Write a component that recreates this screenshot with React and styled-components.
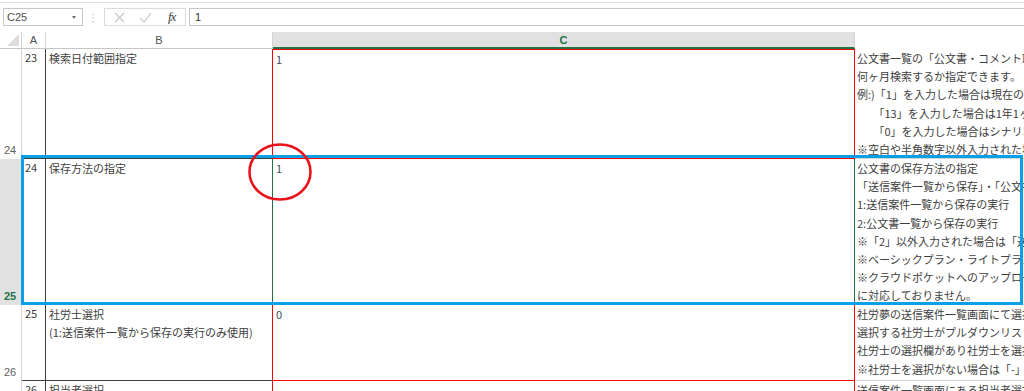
import styled, { createGlobalStyle } from "styled-components";

const GlobalStyle = createGlobalStyle`
  html, body {
    margin: 0;
    padding: 0;
    background: #ffffff;
    overflow: hidden;
  }
  body {
    width: 1024px;
    height: 391px;
    font-family: "Noto Sans CJK JP", "Liberation Sans", sans-serif;
    color: #404040;
  }
`;

const rows = [
  {
    header: "24",
    a: "23",
    b: ["検索日付範囲指定"],
    c: "1",
    d: [
      "公文書一覧の「公文書・コメント取得」画面で",
      "何ヶ月検索するか指定できます。",
      "例:)「1」を入力した場合は現在の月のみ検索します。",
      "　　「13」を入力した場合は1年1ヶ月前から検索します。",
      "　　「0」を入力した場合はシナリオ実行日で検索します。",
      "※空白や半角数字以外入力された場合は「1」として扱います。",
    ],
    edge: "red",
  },
  {
    header: "25",
    a: "24",
    b: ["保存方法の指定"],
    c: "1",
    d: [
      "公文書の保存方法の指定",
      "「送信案件一覧から保存」・「公文書一覧から保存」",
      "1:送信案件一覧から保存の実行",
      "2:公文書一覧から保存の実行",
      "※「2」以外入力された場合は「送信案件一覧から保存」",
      "※ベーシックプラン・ライトプランでは",
      "※クラウドポケットへのアップロードは",
      "に対応しておりません。",
    ],
    edge: "green",
    selected: true,
  },
  {
    header: "26",
    a: "25",
    b: ["社労士選択", "(1:送信案件一覧から保存の実行のみ使用)"],
    c: "0",
    d: [
      "社労夢の送信案件一覧画面にて選択",
      "選択する社労士がプルダウンリストに",
      "社労士の選択欄があり社労士を選択",
      "※社労士を選択がない場合は「-」",
    ],
    edge: "red",
  },
  {
    header: "27",
    a: "26",
    b: ["担当者選択"],
    c: "",
    d: ["送信案件一覧画面にある担当者選択"],
    edge: "red",
  },
];

const edgeColors = { red: "#ff0000", green: "#217346" };

function App() {
  return (
    <Page>
      <GlobalStyle />
      <FormulaBar>
        <NameBox>
          C25
          <DropArrow />
        </NameBox>
        <Dots>⋮</Dots>
        <FxGroup>
          <FxIcon>
            <svg width="11" height="11" viewBox="0 0 11 11">
              <path d="M1 1 L10 10 M10 1 L1 10" stroke="#c8c8c8" strokeWidth="1.2" fill="none" />
            </svg>
          </FxIcon>
          <FxIcon>
            <svg width="13" height="11" viewBox="0 0 13 11">
              <path d="M1 6 L5 10 L12 1" stroke="#c8c8c8" strokeWidth="1.2" fill="none" />
            </svg>
          </FxIcon>
          <FxLabel>fx</FxLabel>
        </FxGroup>
        <FormulaInput>1</FormulaInput>
      </FormulaBar>

      <Sheet>
        <Grid>
          <Corner>
            <svg width="12" height="12" viewBox="0 0 12 12">
              <path d="M12 0 L12 12 L0 12 Z" fill="#dcdcdc" />
            </svg>
          </Corner>
          <ColHead>A</ColHead>
          <ColHead>B</ColHead>
          <ColHead active>C</ColHead>
          <ColHead last />

          {rows.map((r, i) => (
            <Row key={r.header}>
              <RowHead selected={r.selected}>{r.header}</RowHead>
              <Cell>{r.a}</Cell>
              <Cell divider>
                {r.b.map((t) => (
                  <Line key={t}>{t}</Line>
                ))}
              </Cell>
              <ValueCell edge={r.edge} first={i === 0}>
                <Line>{r.c}</Line>
              </ValueCell>
              <NoteCell>
                {r.d.map((t) => (
                  <Line key={t}>{t}</Line>
                ))}
              </NoteCell>
            </Row>
          ))}
        </Grid>

        <SelectionBox />
        <Circle>
          <svg width="66" height="60" viewBox="0 0 66 60">
            <ellipse cx="33" cy="30" rx="30.5" ry="27.5" stroke="#e8141c" strokeWidth="2.6" fill="none" />
          </svg>
        </Circle>
      </Sheet>
    </Page>
  );
}

const Page = styled.div`
  width: 1024px;
  height: 391px;
  overflow: hidden;
`;

const FormulaBar = styled.div`
  box-sizing: border-box;
  border-top: 1px solid #e0e0e0;
  margin-top: 2px;
  padding: 5px 0 0 3px;
  display: flex;
  align-items: flex-start;
  height: 30px;
`;

const NameBox = styled.div`
  position: relative;
  width: 80px;
  height: 18px;
  box-sizing: border-box;
  border: 1px solid #c6c6c6;
  font-family: "Liberation Sans", sans-serif;
  font-size: 11px;
  line-height: 16px;
  padding-left: 3px;
  color: #505050;
  display: flex;
  align-items: center;
`;

const DropArrow = styled.span`
  position: absolute;
  right: 6px;
  top: 7px;
  width: 0;
  height: 0;
  border-left: 2.5px solid transparent;
  border-right: 2.5px solid transparent;
  border-top: 3px solid #707070;
`;

const Dots = styled.span`
  width: 20px;
  text-align: center;
  font-size: 10px;
  line-height: 18px;
  color: #b0b0b0;
`;

const FxGroup = styled.div`
  width: 82px;
  height: 18px;
  margin-left: 1px;
  box-sizing: border-box;
  border: 1px solid #dadada;
  display: flex;
  align-items: center;
  padding-left: 9px;
  gap: 14px;
`;

const FxIcon = styled.span`
  display: flex;
  align-items: center;
`;

const FxLabel = styled.span`
  font-family: "Liberation Serif", serif;
  font-style: italic;
  font-size: 13px;
  color: #404040;
  margin-left: 2px;
  letter-spacing: -1px;
`;

const FormulaInput = styled.div`
  flex: 1;
  height: 18px;
  margin-left: 3px;
  box-sizing: border-box;
  border: 1px solid #c6c6c6;
  border-right: none;
  font-family: "Liberation Sans", sans-serif;
  font-size: 11px;
  line-height: 16px;
  padding-left: 5px;
  color: #333333;
`;

const Sheet = styled.div`
  position: relative;
`;

const Grid = styled.div`
  display: grid;
  grid-template-columns: 22px 24px 227px 582px 1fr;
  grid-template-rows: 17px 110px 146px 76px 40px;
`;

const Corner = styled.div`
  box-sizing: border-box;
  border-right: 1px solid #d4d4d4;
  border-bottom: 1px solid #c6c6c6;
  display: flex;
  align-items: flex-end;
  justify-content: flex-end;
  padding: 0 2px 2px 0;
`;

const ColHead = styled.div`
  box-sizing: border-box;
  font-family: "Liberation Sans", sans-serif;
  font-size: 11px;
  line-height: 16px;
  text-align: center;
  color: ${(p) => (p.active ? "#217346" : "#505050")};
  font-weight: ${(p) => (p.active ? "bold" : "normal")};
  background: ${(p) => (p.active ? "#e1e1e1" : "#ffffff")};
  border-right: ${(p) => (p.last ? "none" : "1px solid #d4d4d4")};
  border-bottom: ${(p) => (p.active ? "2px solid #217346" : p.last ? "none" : "1px solid #c6c6c6")};
`;

const Row = styled.div`
  display: contents;
`;

const RowHead = styled.div`
  box-sizing: border-box;
  border-right: 1px solid #d4d4d4;
  background: ${(p) => (p.selected ? "#e1e1e1" : "#ffffff")};
  color: ${(p) => (p.selected ? "#217346" : "#606060")};
  font-weight: ${(p) => (p.selected ? "bold" : "normal")};
  font-family: "Liberation Sans", sans-serif;
  font-size: 11px;
  line-height: 14px;
  padding: 0 0 2px 4px;
  display: flex;
  align-items: flex-end;
`;

const Cell = styled.div`
  box-sizing: border-box;
  overflow: hidden;
  padding: 0 0 0 3px;
  font-size: 11px;
  border-right: 1px solid ${(p) => (p.divider ? "transparent" : "#404040")};
  border-bottom: 1px solid #404040;
  white-space: nowrap;
`;

const ValueCell = styled.div`
  box-sizing: border-box;
  padding: 0 0 0 3px;
  font-size: 11px;
  color: #444c5c;
  border-left: 1px solid ${(p) => edgeColors[p.edge]};
  border-right: 1px solid ${(p) => edgeColors[p.edge]};
  border-bottom: 1px solid ${(p) => edgeColors[p.edge]};
  border-top: ${(p) => (p.first ? "1px solid #ff0000" : "none")};
  margin-left: -1px;
`;

const NoteCell = styled.div`
  box-sizing: border-box;
  overflow: hidden;
  white-space: nowrap;
  padding: 0 0 0 2px;
  font-size: 11px;
  border-bottom: 1px solid #d4d4d4;
`;

const Line = styled.div`
  height: 18.2px;
  line-height: 18.2px;
`;

const SelectionBox = styled.div`
  position: absolute;
  left: 21px;
  top: 123px;
  width: 1002px;
  height: 150px;
  box-sizing: border-box;
  border: 3px solid #0aa0e8;
  pointer-events: none;
`;

const Circle = styled.div`
  position: absolute;
  left: 247px;
  top: 110px;
  width: 66px;
  height: 60px;
  pointer-events: none;
`;

export default App;
